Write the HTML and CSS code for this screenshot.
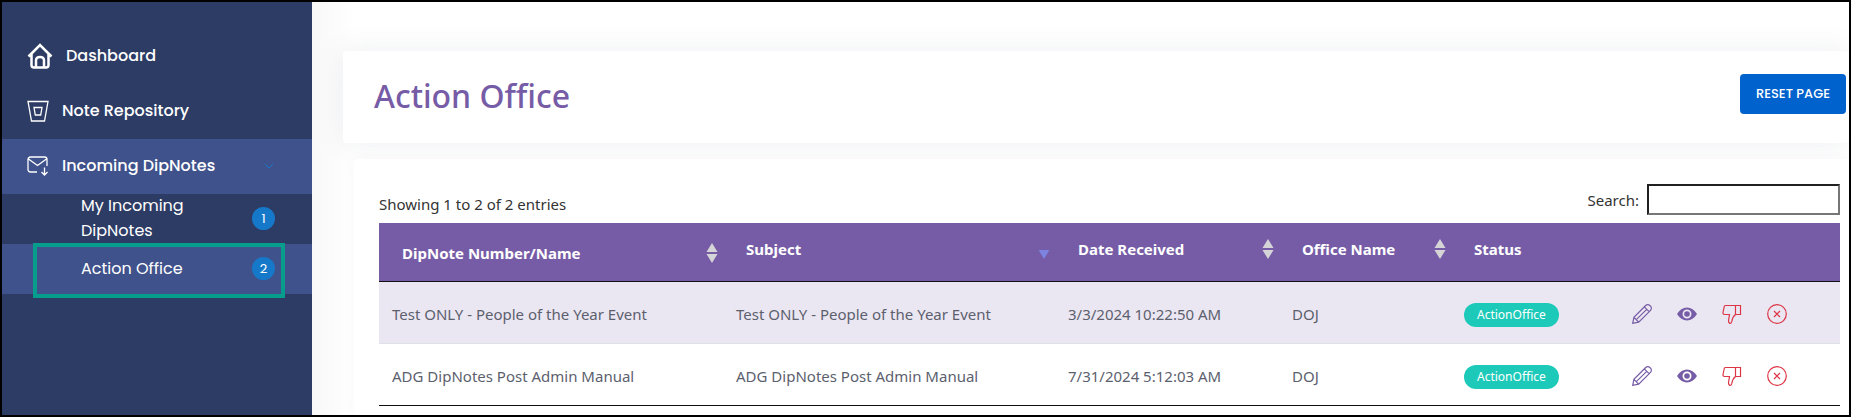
FILE: index.html
```html
<!DOCTYPE html>
<html lang="en">
  <head>
    <meta charset="UTF-8" />
    <meta name="viewport" content="width=device-width, initial-scale=1.0" />
    <title>Action Office | DipNotes</title>
    <link rel="stylesheet" href="styles.css">
  </head>
  <body>
    <!-- shared icons -->
    <svg class="sprite" aria-hidden="true">
      <symbol id="pencil" viewBox="0 0 20 20">
        <path d="M.700 19.300l1.200-6L13.700 1.500c1.200-1.200 3-1.100 4.100 0l.7.700c1.100 1.100 1.200 2.900 0 4.100L6.700 18.100.700 19.300zM1.900 13.300l4.800 4.800M12.300 2.900l4.800 4.800M14.700 5.300L4.300 15.700" />
      </symbol>
      <symbol id="eye" viewBox="0 0 20 20">
        <path fill-rule="evenodd" d="M0 10C2.500 5.700 6 3.500 10 3.500S17.500 5.700 20 10c-2.500 4.300-6 6.500-10 6.500S2.500 14.300 0 10zm10-4.500a4.500 4.500 0 1 0 0 9 4.500 4.500 0 0 0 0-9zm0 1.700a2.800 2.800 0 1 1 0 5.600 2.800 2.800 0 0 1 0-5.600z" />
      </symbol>
      <symbol id="thumb" viewBox="0 0 20 20">
        <path d="M13.500 1.500h5v9h-5zM13.500 1.500H3.500c-1 0-1.300.6-1.300 1.300L1 8.500c-.2 1.300.4 2 1.500 2h5l-.9 5.500c-.2 1.800.3 3.400 1.800 3.400 1 0 1.200-1 1.400-2 .5-3 1.700-5.400 3.700-6.900" />
      </symbol>
      <symbol id="cross" viewBox="0 0 20 20">
        <circle cx="10" cy="10" r="9.300" />
        <path d="M7 7l6 6M13 7l-6 6" />
      </symbol>
      <symbol id="sort" viewBox="0 0 12 20">
        <path d="M6 0l5.500 9H.5zM6 20l5.500-9H.5z" />
      </symbol>
    </svg>

    <div class="page">
      <nav class="sidebar">
        <a class="item home" href="#">
          <svg viewBox="0 0 26 26"><path d="M1.500 13.500L13 2l11.500 11.500M4.500 11v11c0 1.500.8 2.500 2.500 2.500h12c1.700 0 2.500-1 2.500-2.500V11M9 24v-6.500c0-2 1.300-3.500 4-3.500s4 1.500 4 3.500V24" /></svg>
          <span>Dashboard</span>
        </a>
        <a class="item" href="#">
          <svg viewBox="0 0 22 22"><path d="M1 1.500h20l-3.500 19.500h-13zM7 7.500h8l-1.300 7.500H8.300z" /></svg>
          <span>Note Repository</span>
        </a>
        <a class="item active" href="#">
          <svg viewBox="0 0 22 22"><path d="M10 17H3.500C2 17 1 16 1 14.500v-10C1 3 2 2 3.500 2h14C19 2 20 3 20 4.500V11M1.500 4l9 6.500 9-6.500M17.500 12.500v7.500M14.500 17l3 3 3-3" /></svg>
          <span>Incoming DipNotes</span>
          <svg class="chevron" viewBox="0 0 10 10"><path d="M1 3l4 4 4-4" /></svg>
        </a>
        <a class="subitem" href="#">
          <span>My Incoming DipNotes</span>
          <span class="count">1</span>
        </a>
        <a class="subitem active highlight" href="#">
          <span>Action Office</span>
          <span class="count">2</span>
        </a>
      </nav>

      <main class="main">
        <header class="card title">
          <h1>Action Office</h1>
          <button class="reset" type="button">RESET PAGE</button>
        </header>

        <section class="card list">
          <div class="tools">
            <p>Showing 1 to 2 of 2 entries</p>
            <label for="search">Search:</label>
            <input type="search" id="search" />
          </div>
          <table>
            <colgroup>
              <col class="c-number" />
              <col class="c-subject" />
              <col class="c-date" />
              <col class="c-office" />
              <col class="c-status" />
              <col />
            </colgroup>
            <thead>
              <tr>
                <th class="number"><div>DipNote Number/Name <svg class="sort"><use href="#sort" /></svg></div></th>
                <th><div>Subject <svg class="sort down" viewBox="0 0 12 20"><path d="M6 20l5.500-9H.5z" /></svg></div></th>
                <th><div>Date Received <svg class="sort"><use href="#sort" /></svg></div></th>
                <th><div>Office Name <svg class="sort"><use href="#sort" /></svg></div></th>
                <th>Status</th>
                <th></th>
              </tr>
            </thead>
            <tbody>
              <tr>
                <td>Test ONLY - People of the Year Event</td>
                <td>Test ONLY - People of the Year Event</td>
                <td>3/3/2024 10:22:50 AM</td>
                <td>DOJ</td>
                <td><span class="status">ActionOffice</span></td>
                <td>
                  <div class="actions">
                    <button type="button" aria-label="Edit"><svg><use href="#pencil" /></svg></button>
                    <button type="button" class="view" aria-label="View"><svg><use href="#eye" /></svg></button>
                    <button type="button" class="red" aria-label="Reject"><svg><use href="#thumb" /></svg></button>
                    <button type="button" class="red" aria-label="Close"><svg><use href="#cross" /></svg></button>
                  </div>
                </td>
              </tr>
              <tr>
                <td>ADG DipNotes Post Admin Manual</td>
                <td>ADG DipNotes Post Admin Manual</td>
                <td>7/31/2024 5:12:03 AM</td>
                <td>DOJ</td>
                <td><span class="status">ActionOffice</span></td>
                <td>
                  <div class="actions">
                    <button type="button" aria-label="Edit"><svg><use href="#pencil" /></svg></button>
                    <button type="button" class="view" aria-label="View"><svg><use href="#eye" /></svg></button>
                    <button type="button" class="red" aria-label="Reject"><svg><use href="#thumb" /></svg></button>
                    <button type="button" class="red" aria-label="Close"><svg><use href="#cross" /></svg></button>
                  </div>
                </td>
              </tr>
            </tbody>
          </table>
        </section>
      </main>
    </div>
  </body>
</html>
```
FILE: styles.css
```css
* {
  box-sizing: border-box;
  margin: 0;
  padding: 0;
}
body {
  font-family: "Segoe UI", "Noto Sans", "Open Sans", sans-serif;
  font-size: 15px;
  line-height: 24px;
  color: #333;
  background-color: #fff;
}
.sprite {
  display: none;
}
.page {
  display: flex;
  min-height: 100vh;
  border: 2px solid #000;
}

/* sidebar */
.sidebar {
  width: 310px;
  flex-shrink: 0;
  padding-top: 27px;
  background-color: #2d3c65;
  font-family: "Poppins", "Inter", sans-serif;
  font-size: 16px;
}
.sidebar a {
  color: #fff;
  text-decoration: none;
}
.item {
  display: flex;
  align-items: center;
  gap: 13px;
  height: 55px;
  padding: 0 38px 2px 25px;
  font-weight: 500;
}
.item svg {
  width: 22px;
  height: 22px;
  fill: none;
  stroke: #fff;
  stroke-width: 1.3;
}
.home svg {
  width: 26px;
  height: 26px;
  stroke-width: 2.5;
}
.sidebar .active {
  background-color: #3f528b;
}
.item .chevron {
  width: 10px;
  height: 10px;
  margin-left: auto;
  stroke: #1678c8;
  stroke-width: 1;
}
.subitem {
  display: flex;
  align-items: center;
  justify-content: space-between;
  height: 50px;
  padding: 0 37px 2px 79px;
  line-height: 25px;
}
.subitem span:first-child {
  width: 120px;
}
.count {
  width: 23px;
  height: 23px;
  border-radius: 50%;
  background-color: #1678c8;
  font-size: 13px;
  line-height: 23px;
  text-align: center;
}
.highlight {
  position: relative;
}
.highlight::after {
  content: "";
  position: absolute;
  top: -1px;
  right: 27px;
  bottom: -4px;
  left: 31px;
  border: 4px solid #079d8d;
}

/* content */
.main {
  flex: 1;
  min-width: 0;
  padding: 49px 0 0 31px;
  overflow: hidden;
  background: linear-gradient(to right, #f8f8f8, #fff 44px);
}
.card {
  background-color: #fff;
  border-radius: 4px;
}
.title {
  display: flex;
  align-items: center;
  justify-content: space-between;
  height: 92px;
  padding: 0 3px 6px 31px;
  box-shadow: 0 0 28px rgba(82, 85, 120, 0.1);
}
h1 {
  padding-top: 3px;
  color: #765ca6;
  font-size: 32px;
  font-weight: 500;
  line-height: 40px;
}
.reset {
  height: 40px;
  padding: 0 16px;
  border: none;
  border-radius: 4px;
  background-color: #0062cc;
  color: #fff;
  font-family: "Poppins", "Inter", sans-serif;
  font-size: 13px;
  font-weight: 500;
}
.list {
  margin: 16px 0 0 11px;
  padding: 25px 9px 9px 25px;
  box-shadow: 0 0 12px rgba(82, 85, 120, 0.04);
}
.tools {
  display: flex;
  align-items: center;
  gap: 8px;
  padding-bottom: 8px;
}
.tools p {
  align-self: flex-end;
  margin-right: auto;
  line-height: 22px;
}
.tools input {
  width: 193px;
  height: 31px;
  border: 2px inset #767676;
  background-color: #fff;
}

table {
  width: 100%;
  table-layout: fixed;
  border-collapse: collapse;
}
.c-number {
  width: 344px;
}
.c-subject {
  width: 332px;
}
.c-date {
  width: 224px;
}
.c-office {
  width: 172px;
}
.c-status {
  width: 168px;
}
th {
  height: 58px;
  padding: 14px 5px 19px 23px;
  background-color: #765ca6;
  border-bottom: 1px solid #111;
  color: #fff;
  font-weight: 700;
  text-align: left;
  vertical-align: top;
}
th.number {
  padding-top: 18px;
  padding-bottom: 15px;
}
th div {
  display: flex;
  align-items: center;
  justify-content: space-between;
}
.sort {
  width: 12px;
  height: 20px;
  fill: #d5d5d8;
}
.down {
  fill: #7c83e0;
}
td {
  height: 62px;
  padding: 3px 13px 0;
  border-bottom: 1px solid #dee2e6;
  color: #5c5f6e;
}
tbody tr:first-child {
  background-color: #ebe7f2;
}
tbody tr:last-child td {
  border-bottom-color: #111;
}
.status {
  display: inline-block;
  padding: 0 13px;
  border-radius: 12px;
  background-color: #1dcab9;
  color: #fff;
  font-size: 12px;
  line-height: 24px;
}
.actions {
  display: flex;
  gap: 25px;
}
.actions button {
  width: 20px;
  height: 20px;
  border: none;
  background: none;
  color: #765ca6;
  cursor: pointer;
}
.actions svg {
  display: block;
  width: 20px;
  height: 20px;
  fill: none;
  stroke: currentColor;
  stroke-width: 1.2;
}
.actions .view svg {
  fill: currentColor;
  stroke: none;
}
.actions .red {
  color: #dc3545;
}
```
